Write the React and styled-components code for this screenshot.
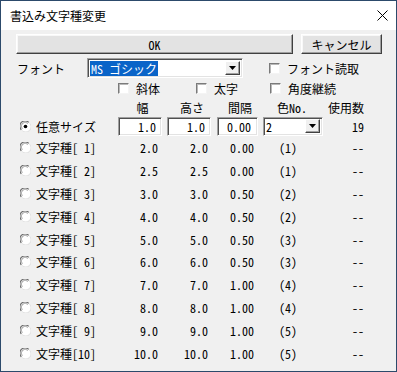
import React from 'react';
import styled, { createGlobalStyle } from 'styled-components';

const Global = createGlobalStyle`
  html, body { margin: 0; padding: 0; background: #f0f0f0; }
  body { width: 397px; height: 372px; overflow: hidden; }
`;

const MONO = `"Noto Sans Mono CJK JP", "Noto Sans CJK JP", monospace`;

const Window = styled.div`
  box-sizing: border-box;
  width: 397px;
  height: 372px;
  border: 1px solid #2c4a6b;
  background: #f0f0f0;
  display: flex;
  flex-direction: column;
  font-family: ${MONO};
  font-size: 12px;
  color: #000;
`;

const TitleBar = styled.div`
  height: 29px;
  flex: none;
  background: #fff;
  display: flex;
  align-items: center;
  justify-content: space-between;
  padding: 0 8px 0 9px;
  font-family: "Noto Sans CJK JP", sans-serif;
  font-size: 12px;
  color: #000;
`;

const Body = styled.div`
  display: flex;
  flex-direction: column;
  padding: 4px 0 0 15px;
`;

const ButtonRow = styled.div`
  display: flex;
  gap: 8px;
  height: 20px;
`;

const Button = styled.div`
  box-sizing: border-box;
  width: ${p => p.$w}px;
  height: 20px;
  display: flex;
  align-items: center;
  justify-content: center;
  background: #e3e3e3;
  border: 1px solid;
  border-color: #ffffff #404040 #404040 #ffffff;
  box-shadow: inset -1px -1px #a0a0a0, inset 1px 1px #f8f8f8;
  font-family: ${MONO};
  font-size: 12px;
`;

const FontRow = styled.div`
  display: flex;
  align-items: center;
  height: 20px;
  margin-top: 4px;
`;

const FieldLabel = styled.span`
  width: 70px;
  padding-left: 1px;
`;

const Sunken = styled.div`
  box-sizing: border-box;
  width: ${p => p.$w}px;
  height: ${p => p.$h || 19}px;
  background: #fff;
  border: 1px solid;
  border-color: #a0a0a0 #ffffff #ffffff #a0a0a0;
  box-shadow: inset 1px 1px #505050, inset -1px -1px #e3e3e3;
  display: flex;
  align-items: center;
  justify-content: ${p => (p.$right ? 'flex-end' : 'space-between')};
  padding: ${p => (p.$right ? `0 ${p.$pr || 5}px 0 0` : '0 2px 0 2px')};
  font-family: ${MONO};
  font-size: 12px;
`;

const Highlight = styled.span`
  background: #0a64c8;
  color: #fff;
  padding: 0 1px;
  height: 15px;
  display: inline-flex;
  align-items: center;
`;

const ArrowBtn = styled.div`
  box-sizing: border-box;
  width: 15px;
  height: 14px;
  background: #f0f0f0;
  border: 1px solid;
  border-color: #ffffff #404040 #404040 #ffffff;
  box-shadow: inset -1px -1px #a0a0a0;
  display: flex;
  align-items: center;
  justify-content: center;
`;

const CheckRow = styled.div`
  display: flex;
  align-items: center;
  height: 20px;
  padding-left: ${p => p.$pl || 0}px;
  margin-left: ${p => p.$ml || 0}px;
`;

const CheckItem = styled.label`
  display: flex;
  align-items: center;
  gap: 7px;
  width: ${p => (p.$w ? `${p.$w}px` : 'auto')};
`;

const Box = styled.span`
  box-sizing: border-box;
  width: 11px;
  height: 11px;
  background: #fff;
  border: 1px solid;
  border-color: #7a7a7a #f4f4f4 #f4f4f4 #7a7a7a;
  box-shadow: inset 1px 1px #b8b8b8;
`;

const Table = styled.div`
  display: grid;
  grid-template-columns: 102px 49px 50px 46px 58px 74px;
  grid-template-rows: 18px 20px repeat(10, 22.9px);
  align-items: center;
`;

const Head = styled.div`
  text-align: center;
  padding-right: ${p => p.$pr || 0}px;
`;

const LabelCell = styled.div`
  display: flex;
  align-items: center;
  gap: 5px;
  padding-left: 4px;
  white-space: pre;
`;

const Num = styled.div`
  text-align: right;
  padding-right: 9px;
  white-space: pre;
`;

const ColorCell = styled.div`
  padding-left: 16px;
`;

const Count = styled.div`
  text-align: center;
`;

const Radio = ({ checked }) => (
  <svg width="11" height="11" viewBox="0 0 12 12">
    <circle cx="6" cy="6" r="5.5" fill="#fff" />
    <path d="M1.5 9.5 A5 5 0 0 1 9.5 1.5" fill="none" stroke="#6e6e6e" strokeWidth="1.3" />
    <path d="M2.8 8.4 A3.6 3.6 0 0 1 8.4 2.8" fill="none" stroke="#a8a8a8" strokeWidth="1.1" />
    <path d="M10.5 2.5 A5 5 0 0 1 2.5 10.5" fill="none" stroke="#e0e0e0" strokeWidth="1" />
    {checked && <circle cx="6" cy="6" r="2" fill="#000" />}
  </svg>
);

const Tri = () => (
  <svg width="7" height="4" viewBox="0 0 7 4">
    <path d="M0 0 H7 L3.5 4 Z" fill="#000" />
  </svg>
);

const rows = [
  ['文字種[ 1]', '2.0', '2.0', '0.00', '(1)'],
  ['文字種[ 2]', '2.5', '2.5', '0.00', '(1)'],
  ['文字種[ 3]', '3.0', '3.0', '0.50', '(2)'],
  ['文字種[ 4]', '4.0', '4.0', '0.50', '(2)'],
  ['文字種[ 5]', '5.0', '5.0', '0.50', '(3)'],
  ['文字種[ 6]', '6.0', '6.0', '0.50', '(3)'],
  ['文字種[ 7]', '7.0', '7.0', '1.00', '(4)'],
  ['文字種[ 8]', '8.0', '8.0', '1.00', '(4)'],
  ['文字種[ 9]', '9.0', '9.0', '1.00', '(5)'],
  ['文字種[10]', '10.0', '10.0', '1.00', '(5)'],
];

export default function App() {
  return (
    <>
      <Global />
      <Window>
        <TitleBar>
          <span>書込み文字種変更</span>
          <svg width="11" height="11" viewBox="0 0 11 11">
            <path d="M0.5 0.5 L10.5 10.5 M10.5 0.5 L0.5 10.5" stroke="#000" strokeWidth="1" />
          </svg>
        </TitleBar>
        <Body>
          <ButtonRow>
            <Button $w={277}>OK</Button>
            <Button $w={81}>キャンセル</Button>
          </ButtonRow>
          <FontRow>
            <FieldLabel>フォント</FieldLabel>
            <Sunken $w={156} $h={20}>
              <Highlight>MS ゴシック</Highlight>
              <ArrowBtn><Tri /></ArrowBtn>
            </Sunken>
            <CheckRow $ml={26}>
              <CheckItem><Box />フォント読取</CheckItem>
            </CheckRow>
          </FontRow>
          <CheckRow $pl={102}>
            <CheckItem $w={78}><Box />斜体</CheckItem>
            <CheckItem $w={74}><Box />太字</CheckItem>
            <CheckItem><Box />角度継続</CheckItem>
          </CheckRow>
          <Table>
            <div />
            <Head>幅</Head>
            <Head>高さ</Head>
            <Head>間隔</Head>
            <Head>色No.</Head>
            <Head $pr={24}>使用数</Head>

            <LabelCell><Radio checked />任意サイズ</LabelCell>
            <div><Sunken $w={44} $right>1.0</Sunken></div>
            <div><Sunken $w={44} $right>1.0</Sunken></div>
            <div><Sunken $w={41} $right $pr={6}>0.00</Sunken></div>
            <div>
              <Sunken $w={60}>
                <span>2</span>
                <ArrowBtn><Tri /></ArrowBtn>
              </Sunken>
            </div>
            <Count>19</Count>

            {rows.map(r => (
              <React.Fragment key={r[0]}>
                <LabelCell><Radio />{r[0]}</LabelCell>
                <Num>{r[1]}</Num>
                <Num>{r[2]}</Num>
                <Num>{r[3]}</Num>
                <ColorCell>{r[4]}</ColorCell>
                <Count>--</Count>
              </React.Fragment>
            ))}
          </Table>
        </Body>
      </Window>
    </>
  );
}
